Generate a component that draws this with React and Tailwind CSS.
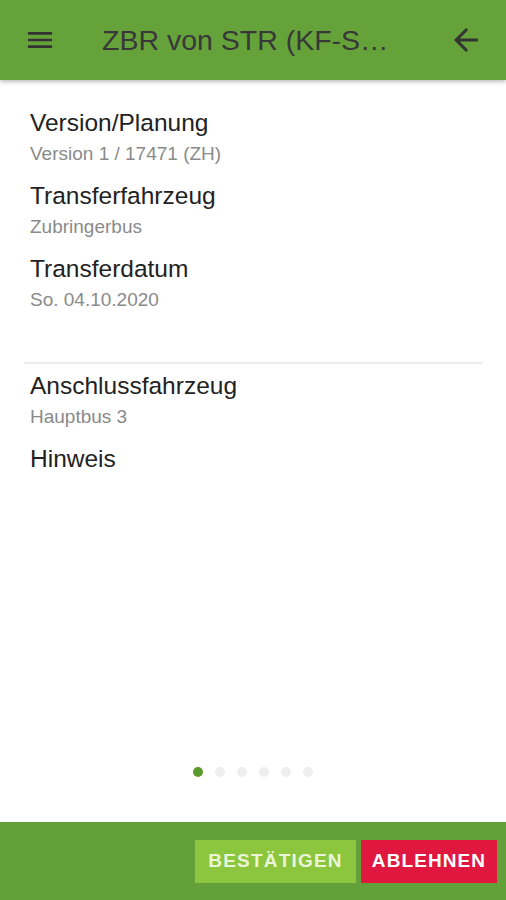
export default function App() {
  const items1 = [
    ["Version/Planung", "Version 1 / 17471 (ZH)"],
    ["Transferfahrzeug", "Zubringerbus"],
    ["Transferdatum", "So. 04.10.2020"],
  ];
  return (
    <div className="flex flex-col h-[900px] w-[506px] bg-white overflow-hidden font-['Liberation_Sans',Arial,sans-serif]">
      <header className="relative z-10 h-[80px] shrink-0 bg-[#66a23a] flex items-center shadow-[0_2px_4px_rgba(0,0,0,0.25)]">
        <div className="w-[80px] flex justify-center">
          <svg width="32" height="32" viewBox="0 0 24 24" fill="#333">
            <path d="M3 18h18v-2H3v2zm0-5h18v-2H3v2zm0-7v2h18V6H3z" />
          </svg>
        </div>
        <div className="flex-1 pl-[22px] text-[28.5px] text-[#383838] leading-none">ZBR von STR (KF-S…</div>
        <div className="w-[80px] flex justify-center">
          <svg width="36" height="36" viewBox="0 0 24 24" fill="#333">
            <path d="M20 11H7.83l5.59-5.59L12 4l-8 8 8 8 1.41-1.41L7.83 13H20v-2z" />
          </svg>
        </div>
      </header>
      <main className="flex-1 flex flex-col">
        <div className="pt-[29px] px-[30px] flex flex-col gap-[17px]">
          {items1.map(([l, s]) => (
            <div key={l} className="flex flex-col gap-[6px]">
              <div className="text-[24.5px] leading-[28px] text-[#222]">{l}</div>
              <div className="text-[19px] leading-[22px] text-[#8a8a8a]">{s}</div>
            </div>
          ))}
        </div>
        <div className="mx-[24px] mt-[51px] h-[2px] bg-[#ececec]" />
        <div className="pt-[8px] px-[30px] flex flex-col gap-[17px]">
          <div className="flex flex-col gap-[6px]">
            <div className="text-[24.5px] leading-[28px] text-[#222]">Anschlussfahrzeug</div>
            <div className="text-[19px] leading-[22px] text-[#8a8a8a]">Hauptbus 3</div>
          </div>
          <div className="text-[24.5px] leading-[28px] text-[#222]">Hinweis</div>
        </div>
        <div className="flex-1" />
        <div className="flex justify-center gap-[12px] pb-[45px]">
          <div className="w-[10px] h-[10px] rounded-full bg-[#5a9a2a]" />
          {[1, 2, 3, 4, 5].map((i) => (
            <div key={i} className="w-[10px] h-[10px] rounded-full bg-[#eeeeee]" />
          ))}
        </div>
      </main>
      <footer className="h-[78px] shrink-0 bg-[#64a03a] flex items-center justify-end gap-[5px] pr-[9px]">
        <button className="w-[161px] h-[43px] bg-[#8cc63e] text-[#eaf5d8] text-[19px] font-bold tracking-[1.2px]">BESTÄTIGEN</button>
        <button className="w-[136px] h-[43px] bg-[#e0173f] text-white text-[19px] font-bold tracking-[1.1px]">ABLEHNEN</button>
      </footer>
    </div>
  );
}
